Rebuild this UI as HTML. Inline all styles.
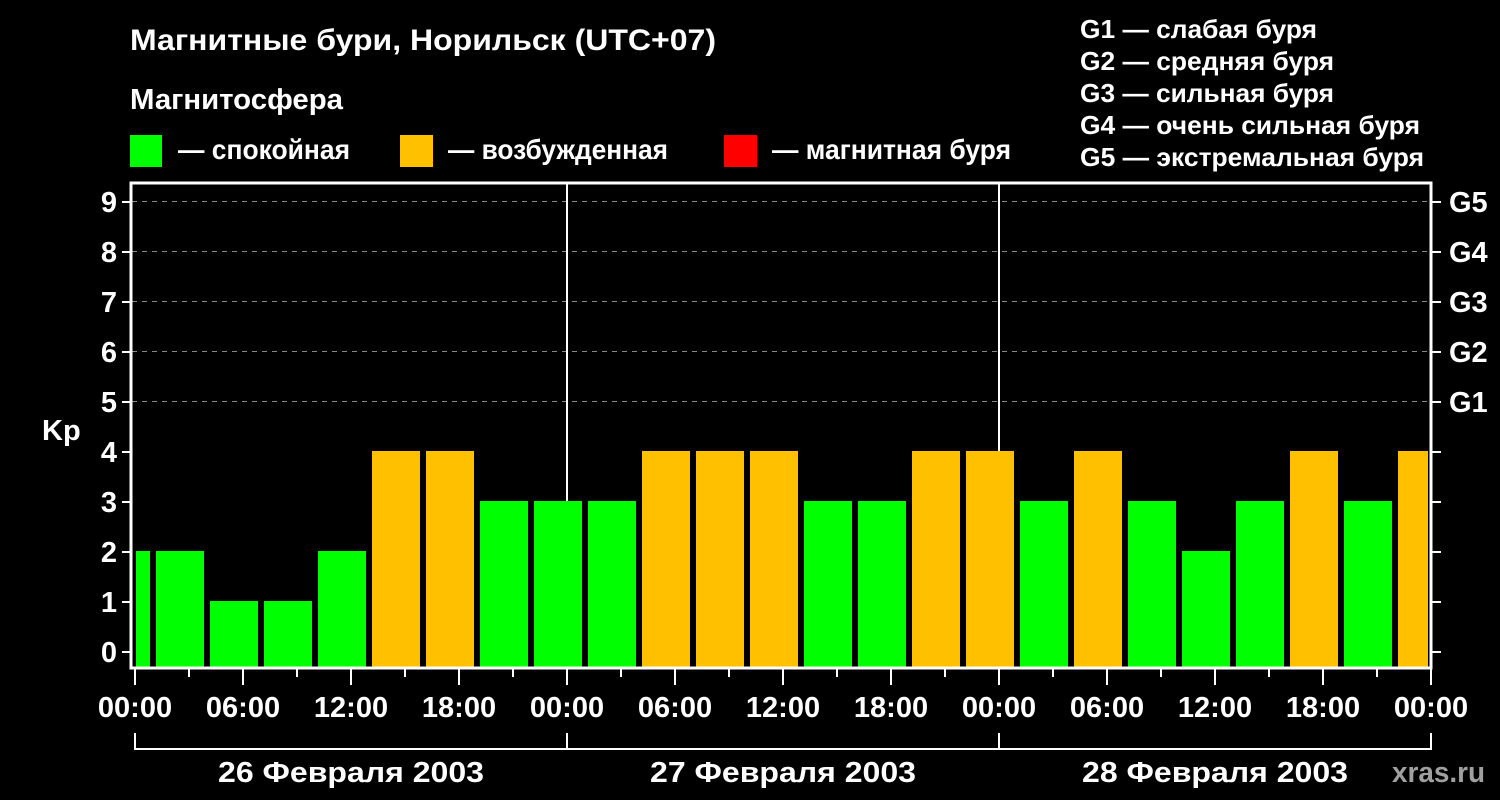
<!DOCTYPE html>
<html><head><meta charset="utf-8"><style>html,body{margin:0;padding:0;background:#000;}svg{display:block}</style></head>
<body>
<svg width="1500" height="800" xmlns="http://www.w3.org/2000/svg" font-family="Liberation Sans, Arial, sans-serif" font-weight="bold" fill="#fff">
<rect width="1500" height="800" fill="#000"/>
<text x="130" y="50" font-size="30" textLength="586" lengthAdjust="spacingAndGlyphs">Магнитные бури, Норильск (UTC+07)</text>
<text x="130" y="109" font-size="29" textLength="213" lengthAdjust="spacingAndGlyphs">Магнитосфера</text>
<rect x="130" y="135" width="32" height="32" fill="#00ff00"/>
<text x="178" y="159" font-size="28" textLength="172" lengthAdjust="spacingAndGlyphs">— спокойная</text>
<rect x="400" y="135" width="33" height="32" fill="#ffc000"/>
<text x="448" y="159" font-size="28" textLength="220" lengthAdjust="spacingAndGlyphs">— возбужденная</text>
<rect x="724" y="135" width="33" height="32" fill="#ff0000"/>
<text x="772" y="159" font-size="28" textLength="239" lengthAdjust="spacingAndGlyphs">— магнитная буря</text>
<g font-size="26">
<text x="1080" y="38" textLength="237" lengthAdjust="spacingAndGlyphs">G1 — слабая буря</text>
<text x="1080" y="70" textLength="254" lengthAdjust="spacingAndGlyphs">G2 — средняя буря</text>
<text x="1080" y="102" textLength="254" lengthAdjust="spacingAndGlyphs">G3 — сильная буря</text>
<text x="1080" y="134" textLength="340" lengthAdjust="spacingAndGlyphs">G4 — очень сильная буря</text>
<text x="1080" y="166" textLength="344" lengthAdjust="spacingAndGlyphs">G5 — экстремальная буря</text>
</g>
<g stroke="#888" stroke-width="1" stroke-dasharray="5,5">
<line x1="132" y1="201.5" x2="1431" y2="201.5"/>
<line x1="132" y1="251.5" x2="1431" y2="251.5"/>
<line x1="132" y1="301.5" x2="1431" y2="301.5"/>
<line x1="132" y1="351.5" x2="1431" y2="351.5"/>
<line x1="132" y1="401.5" x2="1431" y2="401.5"/>
</g>
<g stroke="#fff" stroke-width="2">
<line x1="567" y1="183" x2="567" y2="668"/>
<line x1="999" y1="183" x2="999" y2="668"/>
</g>
<g>
<rect x="136" y="551" width="14" height="117" fill="#00ff00"/>
<rect x="156" y="551" width="48" height="117" fill="#00ff00"/>
<rect x="210" y="601" width="48" height="67" fill="#00ff00"/>
<rect x="264" y="601" width="48" height="67" fill="#00ff00"/>
<rect x="318" y="551" width="48" height="117" fill="#00ff00"/>
<rect x="372" y="451" width="48" height="217" fill="#ffc000"/>
<rect x="426" y="451" width="48" height="217" fill="#ffc000"/>
<rect x="480" y="501" width="48" height="167" fill="#00ff00"/>
<rect x="534" y="501" width="48" height="167" fill="#00ff00"/>
<rect x="588" y="501" width="48" height="167" fill="#00ff00"/>
<rect x="642" y="451" width="48" height="217" fill="#ffc000"/>
<rect x="696" y="451" width="48" height="217" fill="#ffc000"/>
<rect x="750" y="451" width="48" height="217" fill="#ffc000"/>
<rect x="804" y="501" width="48" height="167" fill="#00ff00"/>
<rect x="858" y="501" width="48" height="167" fill="#00ff00"/>
<rect x="912" y="451" width="48" height="217" fill="#ffc000"/>
<rect x="966" y="451" width="48" height="217" fill="#ffc000"/>
<rect x="1020" y="501" width="48" height="167" fill="#00ff00"/>
<rect x="1074" y="451" width="48" height="217" fill="#ffc000"/>
<rect x="1128" y="501" width="48" height="167" fill="#00ff00"/>
<rect x="1182" y="551" width="48" height="117" fill="#00ff00"/>
<rect x="1236" y="501" width="48" height="167" fill="#00ff00"/>
<rect x="1290" y="451" width="48" height="217" fill="#ffc000"/>
<rect x="1344" y="501" width="48" height="167" fill="#00ff00"/>
<rect x="1398" y="451" width="30" height="217" fill="#ffc000"/>
</g>
<path d="M131 668 V183 H1431 V668 Z" fill="none" stroke="#fff" stroke-width="3"/>
<g stroke="#fff" stroke-width="2">
<line x1="122" y1="202" x2="131" y2="202"/><line x1="122" y1="252" x2="131" y2="252"/>
<line x1="122" y1="302" x2="131" y2="302"/><line x1="122" y1="352" x2="131" y2="352"/>
<line x1="122" y1="402" x2="131" y2="402"/><line x1="122" y1="452" x2="131" y2="452"/>
<line x1="122" y1="502" x2="131" y2="502"/><line x1="122" y1="552" x2="131" y2="552"/>
<line x1="122" y1="602" x2="131" y2="602"/><line x1="122" y1="652" x2="131" y2="652"/>
<line x1="1431" y1="202" x2="1441" y2="202"/><line x1="1431" y1="252" x2="1441" y2="252"/>
<line x1="1431" y1="302" x2="1441" y2="302"/><line x1="1431" y1="352" x2="1441" y2="352"/>
<line x1="1431" y1="402" x2="1441" y2="402"/><line x1="1431" y1="452" x2="1441" y2="452"/>
<line x1="1431" y1="502" x2="1441" y2="502"/><line x1="1431" y1="552" x2="1441" y2="552"/>
<line x1="1431" y1="602" x2="1441" y2="602"/><line x1="1431" y1="652" x2="1441" y2="652"/>
<line x1="135" y1="668" x2="135" y2="685"/><line x1="189" y1="668" x2="189" y2="677"/>
<line x1="243" y1="668" x2="243" y2="685"/><line x1="297" y1="668" x2="297" y2="677"/>
<line x1="351" y1="668" x2="351" y2="685"/><line x1="405" y1="668" x2="405" y2="677"/>
<line x1="459" y1="668" x2="459" y2="685"/><line x1="513" y1="668" x2="513" y2="677"/>
<line x1="567" y1="668" x2="567" y2="685"/><line x1="621" y1="668" x2="621" y2="677"/>
<line x1="675" y1="668" x2="675" y2="685"/><line x1="729" y1="668" x2="729" y2="677"/>
<line x1="783" y1="668" x2="783" y2="685"/><line x1="837" y1="668" x2="837" y2="677"/>
<line x1="891" y1="668" x2="891" y2="685"/><line x1="945" y1="668" x2="945" y2="677"/>
<line x1="999" y1="668" x2="999" y2="685"/><line x1="1053" y1="668" x2="1053" y2="677"/>
<line x1="1107" y1="668" x2="1107" y2="685"/><line x1="1161" y1="668" x2="1161" y2="677"/>
<line x1="1215" y1="668" x2="1215" y2="685"/><line x1="1269" y1="668" x2="1269" y2="677"/>
<line x1="1323" y1="668" x2="1323" y2="685"/><line x1="1377" y1="668" x2="1377" y2="677"/>
<line x1="1431" y1="668" x2="1431" y2="685"/>
</g>
<path d="M135 733 V749 H1431 V733 M567 733 V749 M999 733 V749" fill="none" stroke="#fff" stroke-width="2"/>
<g font-size="29" text-anchor="end">
<text x="117" y="212">9</text><text x="117" y="262">8</text><text x="117" y="312">7</text>
<text x="117" y="362">6</text><text x="117" y="412">5</text><text x="117" y="462">4</text>
<text x="117" y="512">3</text><text x="117" y="562">2</text><text x="117" y="612">1</text>
<text x="117" y="662">0</text>
</g>
<text x="42" y="440" font-size="29">Kp</text>
<g font-size="29">
<text x="1449" y="212">G5</text><text x="1449" y="262">G4</text><text x="1449" y="312">G3</text>
<text x="1449" y="362">G2</text><text x="1449" y="412">G1</text>
</g>
<g font-size="29" text-anchor="middle">
<text x="135" y="717">00:00</text><text x="243" y="717">06:00</text><text x="351" y="717">12:00</text><text x="459" y="717">18:00</text>
<text x="567" y="717">00:00</text><text x="675" y="717">06:00</text><text x="783" y="717">12:00</text><text x="891" y="717">18:00</text>
<text x="999" y="717">00:00</text><text x="1107" y="717">06:00</text><text x="1215" y="717">12:00</text><text x="1323" y="717">18:00</text>
<text x="1431" y="717">00:00</text>
<text x="351" y="782" textLength="266" lengthAdjust="spacingAndGlyphs">26 Февраля 2003</text>
<text x="783" y="782" textLength="266" lengthAdjust="spacingAndGlyphs">27 Февраля 2003</text>
<text x="1215" y="782" textLength="266" lengthAdjust="spacingAndGlyphs">28 Февраля 2003</text>
</g>
<text x="1392" y="782" font-size="29" fill="#a0a0a0" textLength="93" lengthAdjust="spacingAndGlyphs">xras.ru</text>
</svg>
</body></html>
